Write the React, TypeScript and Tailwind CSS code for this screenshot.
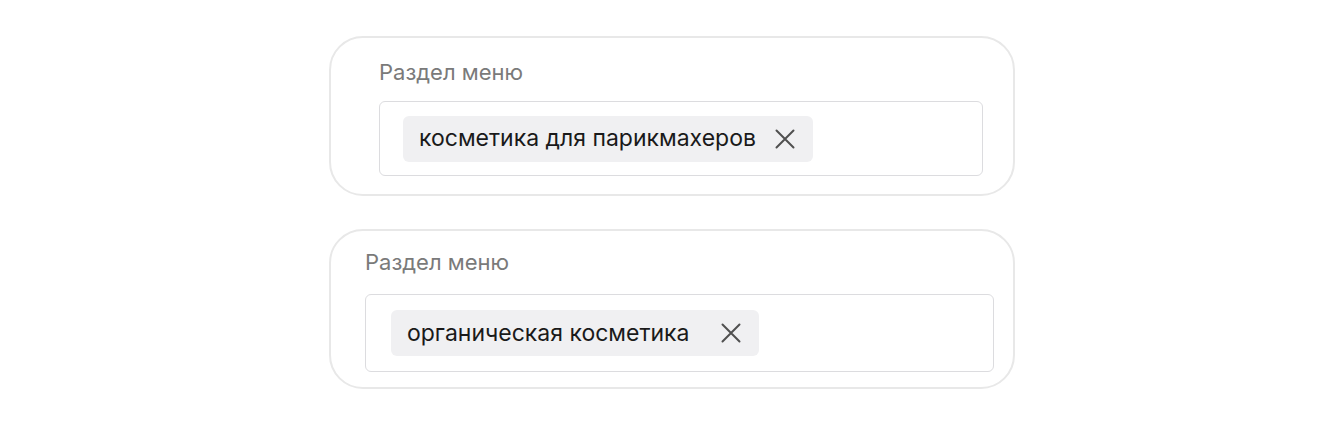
import React from 'react';

function CloseIcon() {
  return (
    <svg width="20" height="20" viewBox="0 0 20 20" fill="none" className="shrink-0">
      <path d="M1.5 1.5L18.5 18.5M18.5 1.5L1.5 18.5" stroke="#505050" strokeWidth="2" strokeLinecap="round" />
    </svg>
  );
}

function Chip({ label, gap }: { label: string; gap: string }) {
  return (
    <div className={`flex h-[46px] items-center rounded-md bg-[#f0f0f2] pl-4 pr-[18px] ${gap}`}>
      <span className="text-[23px] leading-none text-[#1a1a1a]">{label}</span>
      <CloseIcon />
    </div>
  );
}

export default function App() {
  return (
    <div
      className="flex min-h-[424px] w-full flex-col items-center bg-white pt-9"
      style={{ fontFamily: 'Inter, "Noto Sans", sans-serif' }}
    >
      <div className="flex w-[686px] flex-col gap-[33px]">
        <section className="flex flex-col rounded-[34px] border-2 border-[#e8e8e8] pt-[22px] pb-[18px] pl-[48px] pr-[30px]">
          <div className="text-[22px] leading-6 text-[#7a7a7a]">Раздел меню</div>
          <div className="mt-[17px] flex h-[75px] items-center rounded-md border border-[#dcdcdf] px-[23px]">
            <Chip label="косметика для парикмахеров" gap="gap-[19px]" />
          </div>
        </section>
        <section className="flex flex-col rounded-[34px] border-2 border-[#e8e8e8] pt-[19px] pb-[15px] pl-[34px] pr-[19px]">
          <div className="text-[22px] leading-6 text-[#7a7a7a]">Раздел меню</div>
          <div className="mt-[20px] flex h-[78px] items-center rounded-md border border-[#dcdcdf] px-[25px]">
            <Chip label="органическая косметика" gap="gap-[31px]" />
          </div>
        </section>
      </div>
    </div>
  );
}
